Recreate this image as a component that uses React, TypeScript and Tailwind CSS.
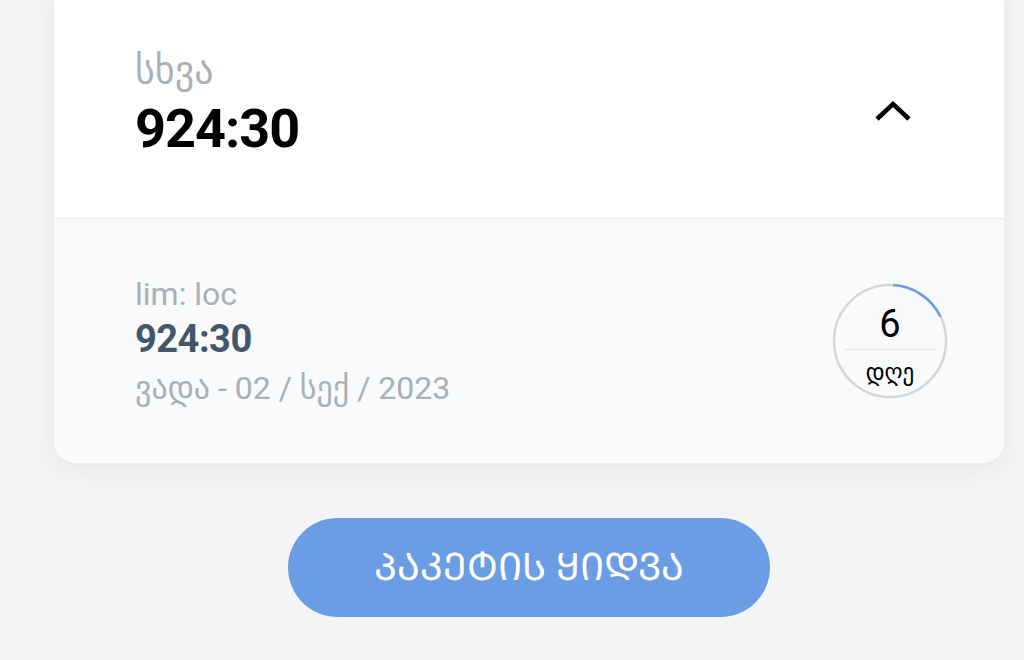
import React from "react";

export default function App() {
  const r = 56;
  const c = 2 * Math.PI * r;
  return (
    <div className="w-[1024px] h-[660px] overflow-hidden bg-[#f3f4f6]" style={{ fontFamily: "Roboto, 'DejaVu Sans', sans-serif" }}>
      <div className="ml-[54px] mr-[20px] -mt-[24px] rounded-[22px] overflow-hidden bg-white shadow-[0_6px_24px_rgba(0,0,0,0.06)]">
        <div className="h-[243px] pt-[24px] flex items-center justify-between pl-[81px] pr-[92px] border-b border-[#e9ecef]">
          <div className="flex flex-col mt-[-10px]">
            <span className="text-[38px] leading-[44px] mb-[6px] text-[#a9b1b6]">სხვა</span>
            <span className="text-[54px] leading-[62px] font-bold text-black tracking-[-1px]">924:30</span>
          </div>
          <svg width="38" height="24" viewBox="0 0 38 24" className="mt-[4px]">
            <path d="M3 20 L19 5 L35 20" fill="none" stroke="#000" strokeWidth="4.5" />
          </svg>
        </div>
        <div className="h-[244px] bg-[#f9fafb] flex items-center justify-between pl-[81px] pr-[55px]">
          <div className="flex flex-col mt-[4px]">
            <span className="text-[32px] leading-[40px] text-[#a9b1b6]">lim: loc</span>
            <span className="text-[38px] leading-[50px] font-bold text-[#44576a] tracking-[-0.5px]">924:30</span>
            <span className="text-[32px] leading-[48px] text-[#a9b1b6]">ვადა - 02 / სექ / 2023</span>
          </div>
          <div className="relative w-[118px] h-[118px]">
            <svg width="118" height="118" viewBox="0 0 118 118" className="absolute inset-0">
              <circle cx="59" cy="59" r={r} fill="none" stroke="#d3d7da" strokeWidth="2.5" />
              <circle
                cx="59"
                cy="59"
                r={r}
                fill="none"
                stroke="#6a9de3"
                strokeWidth="2.5"
                strokeDasharray={`${c * 0.17} ${c}`}
                transform="rotate(-87 59 59)"
              />
            </svg>
            <div className="absolute inset-0 flex flex-col items-center">
              <span className="mt-[21px] text-[38px] leading-[42px] text-black">6</span>
              <div className="mt-[4px] w-[92px] h-px bg-[#e3e6e8]" />
              <span className="mt-[9px] text-[23px] leading-[28px] text-black">დღე</span>
            </div>
          </div>
        </div>
      </div>
      <div className="flex justify-center mt-[55px] ml-[34px]">
        <button className="w-[482px] h-[99px] rounded-full bg-[#6a9de3] text-white text-[38px] flex items-center justify-center">
          ᲞᲐᲙᲔᲢᲘᲡ ᲧᲘᲓᲕᲐ
        </button>
      </div>
    </div>
  );
}
